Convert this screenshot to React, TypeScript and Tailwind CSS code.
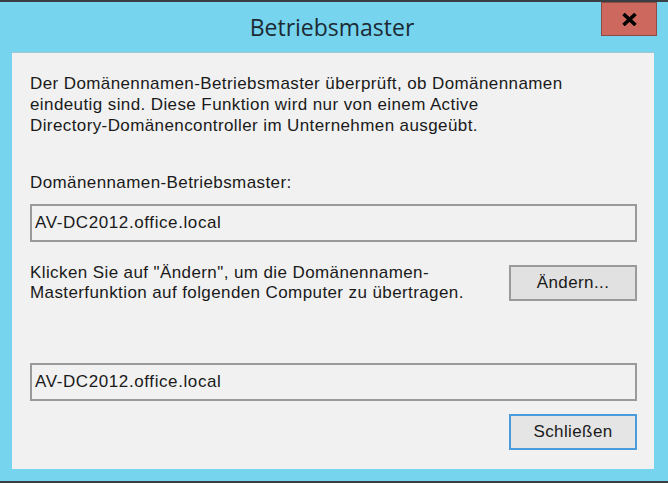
import React from "react";

const ui = { fontFamily: '"Liberation Sans", Arial, sans-serif' };

function TextBox({ value }: { value: string }) {
  return (
    <div className="flex h-[38px] items-center border-2 border-[#9a9a9a] bg-[#f1f1f1] pl-[3px] text-[17px] tracking-[0.6px] text-[#1a1a1a]">
      {value}
    </div>
  );
}

function DialogButton({ label, focused }: { label: string; focused?: boolean }) {
  return (
    <button
      className={
        "flex h-[36px] w-[128px] items-center justify-center border-2 text-[17px] tracking-[0.4px] text-[#1a1a1a] " +
        (focused ? "border-[#4a9bdc] bg-[#e5e5e5]" : "border-[#9a9a9a] bg-[#e1e1e1]")
      }
      style={ui}
    >
      {label}
    </button>
  );
}

export default function App() {
  return (
    <div
      className="flex h-[483px] w-[668px] flex-col border-y-2 border-[#3a3f43] bg-[#76d4ee]"
      style={ui}
    >
      {/* title bar */}
      <div className="grid h-[50px] grid-cols-[1fr_auto_1fr]">
        <div />
        <div
          className="flex items-center pr-[4px] text-[23px] text-[#1c2a34]"
          style={{ fontFamily: '"Open Sans", "Noto Sans", sans-serif' }}
        >
          Betriebsmaster
        </div>
        <div className="flex items-start justify-end pr-[11px]">
          <div className="flex h-[34px] w-[56px] items-center justify-center border border-[#8e4a44] bg-[#cd685e]">
            <svg width="15" height="13" viewBox="0 0 15 13">
              <path d="M1.5 1 L13.5 12 M13.5 1 L1.5 12" stroke="#000" strokeWidth="3.6" />
            </svg>
          </div>
        </div>
      </div>

      {/* client area */}
      <div className="ml-[12px] mr-[14px] flex h-[417px] flex-col border-t border-[#a3c6d2] bg-[#f1f1f1] pl-[18px] pr-[17px] pt-[20px] text-[#1a1a1a]">
        <p className="text-[17px] leading-[21px] tracking-[0.4px]">
          Der Domänennamen-Betriebsmaster überprüft, ob Domänennamen
          <br />
          eindeutig sind. Diese Funktion wird nur von einem Active
          <br />
          Directory-Domänencontroller im Unternehmen ausgeübt.
        </p>

        <div className="mt-[36px] text-[17px] leading-[21px] tracking-[0.4px]">
          Domänennamen-Betriebsmaster:
        </div>

        <div className="mt-[11px]">
          <TextBox value="AV-DC2012.office.local" />
        </div>

        <div className="mt-[21px] flex items-center justify-between">
          <p className="text-[17px] leading-[20px] tracking-[0.4px]">
            Klicken Sie auf "Ändern", um die Domänennamen-
            <br />
            Masterfunktion auf folgenden Computer zu übertragen.
          </p>
          <DialogButton label="Ändern..." />
        </div>

        <div className="mt-[60px]">
          <TextBox value="AV-DC2012.office.local" />
        </div>

        <div className="mt-[13px] flex justify-end">
          <DialogButton label="Schließen" focused />
        </div>
      </div>
    </div>
  );
}
